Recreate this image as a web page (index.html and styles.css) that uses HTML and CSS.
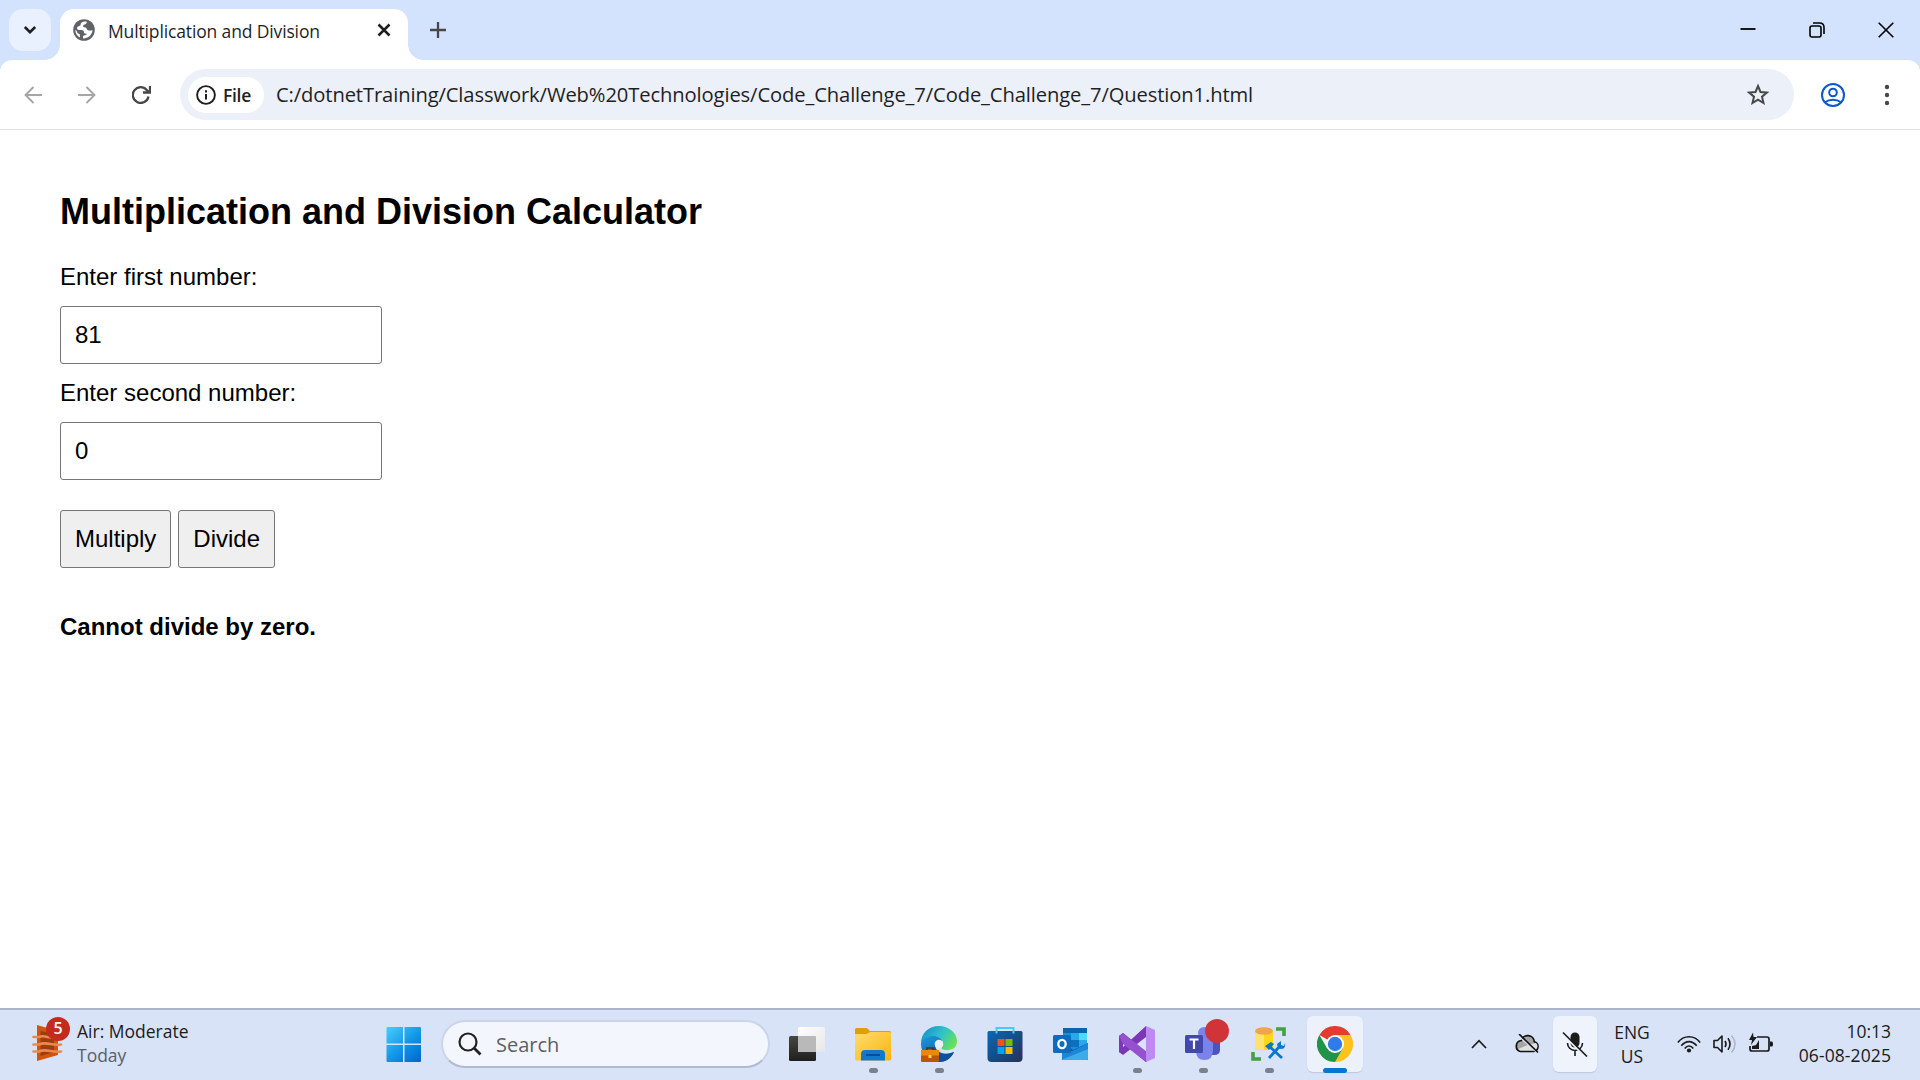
FILE: index.html
```html
<!DOCTYPE html>
<html lang="en">
<head>
<meta charset="utf-8">
<title>Multiplication and Division</title>
<link rel="stylesheet" href="styles.css">
</head>
<body>
<div class="desktop">
  <header class="tabstrip">
    <button class="tab-search" aria-label="Search tabs"><svg width="14" height="10" viewBox="0 0 14 10"><path d="M1.8 2 7 7.200 12.200 2" fill="none" stroke="#1f1f1f" stroke-width="2.600"/></svg></button>
    <div class="tab">
      <svg class="favicon" width="22" height="22" viewBox="0 0 22 22"><circle cx="11" cy="11" r="10.800" fill="#5f6368"/><path d="M13.500 2.600C10 2 7.500 3.500 7.500 6c0 1.500-3.500 1-3.500 3.200 0 1.300 1.500 1.800 4.200 1.800 2.300 0 2.800 1 2.800 2.500 0 1.200 1.500 1.200 3 1.200-.2 1.800-4 1.300-4 2.800v1.900c5 .2 9.300-3.600 9.500-8.400-1.500.7-3.500.8-5-.1-1-.6-.7-2.200-2.300-2.400-1.500-.2-2.500-.8-2-2 .4-1.200 2.300-.7 3-1.700.5-.7.700-1.400.3-2.200zM2.400 11c-.1 3.300 1.700 6.200 4.600 7.600v-2.200c0-1.200-.7-1.900-1.900-2C3.800 14.200 4.500 11.500 2.400 11z" fill="#fff"/></svg>
      <span class="tab-title">Multiplication and Division</span>
      <svg class="tab-close" width="14" height="14" viewBox="0 0 14 14"><path d="M1.500 1.500l11 11M12.500 1.500l-11 11" stroke="#1f1f1f" stroke-width="2.500"/></svg>
    </div>
    <svg class="new-tab" width="16" height="16" viewBox="0 0 16 16"><path d="M8 0v16M0 8h16" stroke="#474747" stroke-width="2.300"/></svg>
    <div class="window-controls">
      <svg width="16" height="16" viewBox="0 0 16 16"><path d="M.5 7h15" stroke="#000" stroke-width="1.800"/></svg>
      <svg width="16" height="16" viewBox="0 0 16 16"><g fill="none" stroke="#000" stroke-width="1.600"><rect x="1" y="4" width="11" height="11" rx="2"/><path d="M4 1h6.500Q15 1 15 5.500V12"/></g></svg>
      <svg width="16" height="16" viewBox="0 0 16 16"><path d="M.7.7l14.600 14.600M15.300.7.7 15.300" stroke="#000" stroke-width="1.600"/></svg>
    </div>
  </header>
  <div class="toolbar-back">
    <nav class="toolbar">
      <svg class="nav-icon" width="18" height="18" viewBox="0 0 18 18"><path d="M9.500 1 1.500 9l8 8M1.500 9H18" fill="none" stroke="#a6a6a6" stroke-width="1.900"/></svg>
      <svg class="nav-icon" width="18" height="18" viewBox="0 0 18 18"><path d="M8.500 1l8 8-8 8M16.500 9H0" fill="none" stroke="#a6a6a6" stroke-width="1.900"/></svg>
      <svg class="nav-icon" width="19" height="18" viewBox="0 0 19 18"><path d="M16.500 10.500A7.900 7.900 0 1 1 15 4.200L17 6.200M18 0v6.500h-7" fill="none" stroke="#474747" stroke-width="2.300"/></svg>
      <div class="omnibox">
        <div class="scheme">
          <svg width="20" height="20" viewBox="0 0 20 20"><circle cx="10" cy="10" r="8.900" fill="none" stroke="#1f1f1f" stroke-width="1.900"/><path d="M10 9v5.500M10 5.200v2.200" stroke="#1f1f1f" stroke-width="2"/></svg>
          <span class="scheme-text">File</span>
        </div>
        <span class="url">C:/dotnetTraining/Classwork/Web%20Technologies/Code_Challenge_7/Code_Challenge_7/Question1.html</span>
        <svg class="star" width="24" height="23" viewBox="0 0 24 23"><path d="M12 3l2.500 6 6.400.5-4.900 4.200 1.500 6.300L12 16.700 6.500 20 8 13.700 3.100 9.500 9.500 9z" fill="none" stroke="#474747" stroke-width="2"/></svg>
      </div>
      <svg class="profile" width="24" height="24" viewBox="0 0 24 24"><g fill="none" stroke="#0b57d0" stroke-width="2"><circle cx="12" cy="12" r="11"/><circle cx="12" cy="9.500" r="3.800"/><path d="M4 19.300c4.600-3.300 11.400-3.300 16 0"/></g></svg>
      <svg class="menu" width="6" height="22" viewBox="0 0 6 22"><g fill="#474747"><circle cx="3" cy="3" r="2.200"/><circle cx="3" cy="11" r="2.200"/><circle cx="3" cy="19" r="2.200"/></g></svg>
    </nav>
  </div>

  <main class="page">
    <h2 class="heading">Multiplication and Division Calculator</h2>
    <label class="label" for="first">Enter first number:</label>
    <input class="field" id="first" type="text" value="81">
    <label class="label" for="second">Enter second number:</label>
    <input class="field" id="second" type="text" value="0">
    <div class="actions"><button class="action">Multiply</button><button class="action">Divide</button></div>
    <p class="result">Cannot divide by zero.</p>
  </main>

  <footer class="taskbar">
    <div class="widget">
      <div class="widget-icon">
        <svg width="32" height="36" viewBox="0 0 32 36"><path d="M5 0l21 6v24L5 36z" fill="#d0560f"/><path d="M8.500 6l13.500 3v18L8.500 31z" fill="#9c3d0c"/><g fill="none" stroke="#ee8850" stroke-width="2.600" stroke-linecap="round"><path d="M1.500 12H7c5-2.500 10 1.500 15 .5M1.500 19.500H7c7-3.500 13 1.500 22 0M1.500 26.500H7c7-3.500 13 1.500 22 0"/></g></svg>
        <span class="count">5</span>
      </div>
      <div class="widget-text"><span class="widget-main">Air: Moderate</span><span class="widget-sub">Today</span></div>
    </div>
    <svg class="start" width="36" height="36" viewBox="0 0 36 36"><defs><linearGradient id="win" gradientUnits="userSpaceOnUse" x1="0" y1="0" x2="32" y2="36"><stop stop-color="#4cd0ff"/><stop offset=".55" stop-color="#1397e6"/><stop offset="1" stop-color="#0069cf"/></linearGradient></defs><path d="M1.500 1H17v16.500H.5V2q0-1 1-1zM18.500 1H34q1 0 1 1v15.500H18.500zM.5 19H17v17H1.500q-1 0-1-1zM18.500 19H35v16q0 1-1 1H18.500z" fill="url(#win)"/></svg>
    <div class="search">
      <svg width="24" height="24" viewBox="0 0 24 24"><circle cx="10" cy="10" r="8.500" fill="none" stroke="#222" stroke-width="2.200"/><path d="M16 16l6.500 6.500" stroke="#222" stroke-width="2.800"/></svg>
      <span class="search-text">Search</span>
    </div>
    <div class="apps">
      <div class="app"><svg width="36" height="36" viewBox="0 0 36 36"><defs><linearGradient id="tvd" x1="0" y1="0" x2="0" y2="1"><stop stop-color="#454543"/><stop offset="1" stop-color="#20201f"/></linearGradient><linearGradient id="tvl" x1="0" y1="0" x2="1" y2="1"><stop stop-color="#fff"/><stop offset="1" stop-color="#e6e6e6"/></linearGradient></defs><rect x="0" y="10" width="27" height="25" rx="1.500" fill="url(#tvd)"/><rect x="9" y="1" width="27" height="25" rx="1.500" fill="url(#tvl)"/><path d="M9 10h17q1 0 1 1v15H9z" fill="#b9b9b9"/></svg></div>

      <div class="app running"><svg width="36" height="36" viewBox="0 0 36 36"><defs><linearGradient id="fol" x1="0" y1="0" x2="1" y2="1"><stop stop-color="#ffdc70"/><stop offset="1" stop-color="#f9b50d"/></linearGradient></defs><path d="M0 3.500Q0 2 1.500 2H11q1 0 2 1l2 2h19.500Q36 5 36 6.500V15H0z" fill="#dda009"/><path d="M0 8h11q1 0 2-.7L15.500 6H34.500Q36 6 36 7.500V33q0 1.500-1.500 1.500h-33Q0 34.500 0 33z" fill="url(#fol)"/><path d="M6 34.500V28q0-4 4-4h16q4 0 4 4v6.500z" fill="#1079cf"/><path d="M11 29h14" stroke="#064b8f" stroke-width="1.800"/></svg></div>

      <div class="app running"><svg width="36" height="36" viewBox="0 0 36 36"><defs><linearGradient id="eg" x1="0" y1=".2" x2="1" y2=".7"><stop stop-color="#168fc7"/><stop offset=".5" stop-color="#2fc2cb"/><stop offset="1" stop-color="#6ce34e"/></linearGradient><linearGradient id="eb" x1="0" y1="0" x2=".5" y2="1"><stop stop-color="#1b9cdf"/><stop offset="1" stop-color="#0c59a4"/></linearGradient></defs><path d="M0 18C0 10 9 8 15 10c5 1 7 4 6 6-7-3-9 3-5 8 4 4 10 5 17 2-3 6-8 10-15 10C8 36 0 28 0 18z" fill="url(#eb)"/><path d="M14 20c1 8 9 10 19 6-3 7-9 10-15 10-5 0-8-3-9-8z" fill="#10509b"/><path d="M0 17C0 7 8 0 18 0s18 7 18 15c0 7-5 9-10 9-5 0-6-1-5-3 3-5-1-10-8-11C7 10 2 12 0 17z" fill="url(#eg)"/><circle cx="18" cy="18" r="4.300" fill="#e9eff9"/><path d="M6 24v-2h6v2" fill="none" stroke="#4a3520" stroke-width="1.700"/><rect x="0" y="24" width="18" height="12" rx="1" fill="#b35a08"/><path d="M0 25q0-1 1-1h16q1 0 1 1v4.500H0z" fill="#e48a11"/><rect x="7.500" y="29" width="3" height="3" fill="#ffd64a"/></svg></div>

      <div class="app"><svg width="36" height="36" viewBox="0 0 36 36"><defs><linearGradient id="sto" x1="0" y1="0" x2="1" y2="1"><stop stop-color="#0868b8"/><stop offset="1" stop-color="#243257"/></linearGradient></defs><path d="M.5 6.500Q.5 5 2 5h32q1.500 0 1.500 1.500V32q0 4-4 4h-27q-4 0-4-4z" fill="url(#sto)"/><path d="M9.500 7.500V2h17v5.500" fill="none" stroke="#4cc8f4" stroke-width="2"/><path d="M10.500 13h7v7h-7z" fill="#f25022"/><path d="M18.500 13h7v7h-7z" fill="#7fba00"/><path d="M10.500 21h7v7h-7z" fill="#00a4ef"/><path d="M18.500 21h7v7h-7z" fill="#ffb900"/></svg></div>

      <div class="app"><svg width="36" height="36" viewBox="0 0 36 36"><path d="M10 3.500Q10 2 11.500 2h21Q34 2 34 3.500V24H10z" fill="#1490df"/><path d="M10 2h24v5H10z" fill="#0a65b0"/><path d="M18 7h8v7h-8z" fill="#28a8ea"/><path d="M26 7h8v7h-8z" fill="#50d9ff"/><path d="M18 14h8v7h-8z" fill="#0c70c0"/><path d="M26 14h8v7h-8z" fill="#28a8ea"/><path d="M10 17l10 7 15-7v10H10z" fill="#0b4c91"/><path d="M35 17v17H9V22l10 3z" fill="#1d86d8"/><path d="M8 34l27-11v9.500q0 1.500-1.500 1.500z" fill="#3dabe9"/><rect x="0" y="9" width="18" height="18" rx="1.500" fill="#0f6cbd"/><ellipse cx="9" cy="18" rx="3.700" ry="4.200" fill="none" stroke="#fff" stroke-width="2.300"/></svg></div>

      <div class="app running"><svg width="36" height="36" viewBox="0 0 36 36"><path d="M0 10l4-3 23 19v10L4 17v11l-4-2z" fill="#63259f"/><path d="M0 26l4 3L27 11V0L4 21V9l-4 1z" fill="#7b37b6"/><path d="M0 10l4-3 24 19v10h-1L4 18z" fill="#9551ce"/><path d="M27 0l9 4v28l-9 4z" fill="#bc8af0"/></svg></div>

      <div class="app running"><svg width="36" height="36" viewBox="0 0 36 36"><circle cx="30" cy="9" r="4.500" fill="#5059c9"/><path d="M22 13h12q1 0 1 1v10q0 5-6 5h-7z" fill="#4b53bc"/><circle cx="19" cy="7" r="6" fill="#7b83eb"/><path d="M11 12h17v12q0 10-8.500 10T11 25z" fill="#7b83eb"/><rect x="0" y="9" width="18" height="18" rx="1.500" fill="#4348ad"/><path d="M4.500 13.500h9M9 13.500V23" stroke="#fff" stroke-width="2.200"/></svg><span class="alert"></span></div>

      <div class="app running"><svg width="36" height="36" viewBox="0 0 36 36"><path d="M4 5v17c0 3 18 3 18 0V5z" fill="#ffd51e"/><path d="M4 5h9v19.200C8 24 4 23 4 22z" fill="#ffe36d"/><ellipse cx="13" cy="5" rx="9" ry="3.800" fill="#efa64b"/><path d="M25 3h8v7M2 26v7h8" fill="none" stroke="#43a047" stroke-width="3.600"/><path d="M18 20l13 12M18 32l11-12" stroke="#0878cc" stroke-width="2.800"/><path d="M14 20l6-4 3 2-5 6zM27 22l-1-4 4-3v4l3 1 1-3q1 6-4 6z" fill="#0878cc"/></svg></div>

      <div class="app active"><svg width="36" height="36" viewBox="0 0 36 36"><path d="M18 18 2.400 9A18 18 0 0 1 33.600 9z" fill="#e33b2e"/><path d="M18 18V9h15.600A18 18 0 0 1 18 36l7.800-13.500z" fill="#fdc21b"/><path d="M18 18l7.800 4.500L18 36A18 18 0 0 1 2.400 9l7.800 13.500z" fill="#219345"/><circle cx="18" cy="18" r="9" fill="#fff"/><circle cx="18" cy="18" r="7.200" fill="#2f7bea"/></svg></div>
    </div>
    <div class="tray">
      <svg class="overflow" width="16" height="10" viewBox="0 0 16 10"><path d="M1 9l7-7.300L15 9" fill="none" stroke="#1b1b1b" stroke-width="1.700"/></svg>
      <svg class="cloud" width="26" height="20" viewBox="0 0 26 20"><path d="M6.500 17.500h13a5 5 0 0 0 .8-9.800A6.500 6.500 0 0 0 7.500 6.500a5.600 5.600 0 0 0-1 11z" fill="#a5a5a5" stroke="#111" stroke-width="1.700"/><path d="M4 15l10-4 8-2q3.500 3.500-1 7.500H6z" fill="#e0e0df"/><path d="M4 1.500l19 17" stroke="#d8e3f6" stroke-width="1.500"/><path d="M5 0l19 18.500" stroke="#111" stroke-width="1.700"/></svg>
      <div class="mic"><svg width="26" height="26" viewBox="0 0 26 26"><rect x="8.500" y="1.500" width="9" height="15" rx="4.500" fill="#1b1b1b"/><path d="M5.500 12a7.500 7.500 0 0 0 15 0M13 19.500V25" fill="none" stroke="#1b1b1b" stroke-width="1.600"/><path d="M.5 3l23 23" stroke="#eef3fc" stroke-width="2"/><path d="M1 1.500l24 24" stroke="#1b1b1b" stroke-width="1.600"/></svg></div>
      <div class="language"><span>ENG</span><span>US</span></div>
      <div class="status">
        <svg width="24" height="18" viewBox="0 0 24 18"><g fill="none" stroke="#1b1b1b" stroke-width="1.600"><path d="M.8 7.500c6-7.600 16.400-7.600 22.400 0M4.300 10.800c4.400-5.600 11-5.600 15.400 0M7.700 13.400c2.500-3.200 6.100-3.200 8.600 0"/></g><circle cx="12" cy="15.500" r="2.100" fill="#1b1b1b"/></svg>
        <svg width="24" height="20" viewBox="0 0 24 20"><g fill="none" stroke="#1b1b1b" stroke-width="1.600"><path d="M1 6.500h3.500L9 2v16l-4.500-4.500H1z" stroke-linejoin="round"/><path d="M12 7q2 3 0 6M15 4.300q4 5.700 0 11.400"/><path d="M18.500 1.500q7 8.500 0 17" stroke="#aeb9cd"/></g></svg>
        <svg class="battery" width="24" height="20" viewBox="0 0 24 20"><path d="M8 3h10q2 0 2 2v10q0 2-2 2H3q-2 0-2-2v-3" fill="none" stroke="#1b1b1b" stroke-width="1.700"/><path d="M21 7.500h2q1 0 1 2.500t-1 2.500h-2zM3 15v-3l4-1 3-5v9z" fill="#1b1b1b"/><path d="M4-1.500L0 6h3l-1 5 6-8H4.500z" fill="#1b1b1b"/></svg>
      </div>
      <div class="clock"><span>10:13</span><span class="date">06-08-2025</span></div>
    </div>
  </footer>
</div>
</body>
</html>
```
FILE: styles.css
```css
* { box-sizing: border-box; }
body { margin: 0; font-family: "Open Sans", "Noto Sans", sans-serif; color: #1b1b1b; }
svg { display: block; flex: none; }
.desktop { display: flex; flex-direction: column; width: 1920px; height: 1080px; overflow: hidden; background: #fff; }
.tabstrip { display: flex; flex: none; height: 60px; background: #d3e2fd; padding: 9px 26px 0 9px; }
.tab-search { display: flex; align-items: center; justify-content: center; width: 42px; height: 42px; padding: 0; border: 0; border-radius: 14px; background: #e9f0fe; }
.tab { position: relative; display: flex; align-items: center; width: 348px; height: 51px; margin-left: 9px; padding: 0 17px 9px 13px; border-radius: 14px 14px 0 0; background: #fff; }
.tab::before, .tab::after { content: ""; position: absolute; bottom: 0; width: 15px; height: 15px; }
.tab::before { left: -15px; background: radial-gradient(circle at 0 0, transparent 14.5px, #fff 15px); }
.tab::after { right: -15px; background: radial-gradient(circle at 100% 0, transparent 14.5px, #fff 15px); }
.tab-title { margin-left: 13px; font-size: 17.500px; line-height: 24px; letter-spacing: -.14px; white-space: nowrap; color: #1f1f1f; padding-top: 1px; }
.tab-close { margin-left: auto; }
.new-tab { margin: 13px 0 0 22px; }
.window-controls { display: flex; gap: 53px; margin: 13px 0 0 auto; }
.toolbar-back { flex: none; height: 70px; background: #d3e2fd; }
.toolbar { display: flex; align-items: center; height: 70px; padding: 0 30px 0 24px; background: #fff; border-bottom: 1px solid #dfe1e5; border-radius: 12px 12px 0 0; }
.nav-icon { margin-right: 36px; }
.nav-icon:nth-child(3) { margin-right: 29px; }
.omnibox { display: flex; align-items: center; width: 1614px; height: 51px; padding: 0 24px 0 8px; border-radius: 26px; background: #ecf0f9; }
.scheme { display: flex; align-items: center; gap: 7px; width: 76px; height: 36px; padding-left: 8px; border-radius: 18px; background: #fff; }
.scheme-text { font-size: 17.500px; font-weight: 600; letter-spacing: -.3px; color: #1f1f1f; }
.url { margin-left: 12px; padding-bottom: 2px; font-size: 20.200px; letter-spacing: -.12px; white-space: nowrap; color: #1f1f1f; }
.star { margin-left: auto; }
.profile { margin-left: 27px; }
.menu { margin-left: auto; }
.page { flex: 1; display: flex; flex-direction: column; align-items: flex-start; padding: 61px 60px 0; font-family: "Liberation Sans", Arial, sans-serif; font-size: 24px; line-height: 27px; color: #000; }
.heading { margin: 0 0 30px; font-size: 36px; line-height: 42px; }
.label { margin-bottom: 16px; }
.field { width: 322px; height: 58px; margin: 0 0 15px; padding: 0 14px; border: 1px solid #767676; border-radius: 3px; font: inherit; color: #000; }
.actions { display: flex; gap: 7px; margin: 15px 0 45px; }
.action { height: 58px; padding: 0 14px 2px; border: 1px solid #767676; border-radius: 3px; background: #efefef; font: inherit; color: #000; }
.result { margin: 0; font-weight: bold; }
.taskbar { display: flex; flex: none; height: 72px; border-top: 2px solid #abb4ca; background: #d8e3f7; }
.widget { display: flex; width: 386px; padding: 6px 0 0 32px; }
.widget-icon { position: relative; width: 40px; padding-top: 9px; }
.count { position: absolute; left: 14px; top: 1px; width: 24px; height: 24px; border-radius: 50%; background: #c42b1c; color: #fff; font-size: 16px; font-weight: 600; line-height: 23px; text-align: center; }
.widget-text { display: flex; flex-direction: column; margin-left: 5px; padding-top: 3px; font-size: 17.500px; line-height: 24px; }
.widget-sub { color: #5a5f69; }
.start { margin-top: 16px; }
.search { display: flex; align-items: center; width: 329px; height: 48px; margin: 10px 0 0 19px; padding: 0 15px; border: 2px solid #cad5e9; border-bottom-color: #b0bad0; border-radius: 24px; background: #f3f6fd; }
.search-text { margin-left: 14px; font-size: 20px; color: #5d5f63; }
.apps { display: flex; margin-left: 4px; }
.app { position: relative; display: flex; justify-content: center; width: 66px; height: 70px; padding-top: 16px; }
.running::after { content: ""; position: absolute; left: 29px; bottom: 7px; width: 9px; height: 5px; border-radius: 3px; background: #7b818c; }
.active::before { content: ""; position: absolute; left: 5px; top: 6px; width: 56px; height: 56px; border-radius: 6px; background: #ecf1fb; box-shadow: 0 1px 1px #bdc8dc; }
.active::after { content: ""; position: absolute; left: 21px; bottom: 7px; width: 24px; height: 5px; border-radius: 3px; background: #0078d4; }
.active svg { position: relative; }
.alert { position: absolute; left: 35px; top: 9px; width: 24px; height: 24px; border-radius: 50%; background: #d13438; }
.tray { display: flex; align-items: center; margin-left: auto; padding: 0 29px 3px 0; font-size: 17.500px; line-height: 24px; }
.cloud { margin-left: 27px; }
.mic { display: flex; align-items: center; justify-content: center; width: 44px; height: 56px; margin-left: 13px; border-radius: 6px; background: #eef3fc; box-shadow: 0 1px 1px #bdc8dc; }
.language { display: flex; flex-direction: column; align-items: center; width: 70px; }
.status { display: flex; align-items: center; gap: 12px; margin-left: 10px; }
.battery { overflow: visible; }
.clock { display: flex; flex-direction: column; align-items: flex-end; width: 118px; padding-bottom: 2px; }
.date { letter-spacing: .1px; }
```
